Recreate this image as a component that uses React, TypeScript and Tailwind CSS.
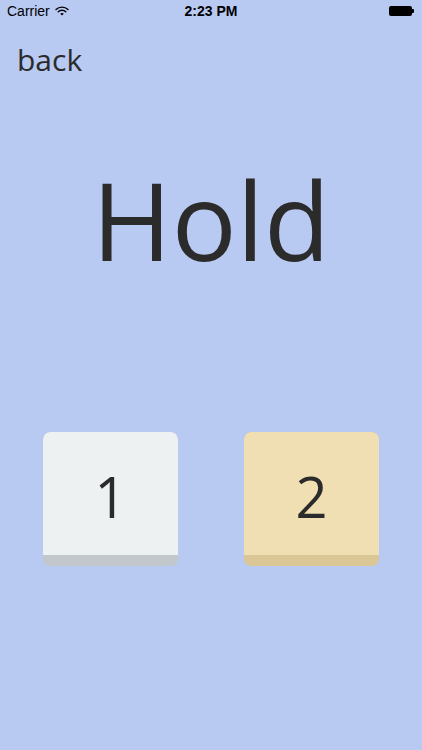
import React from "react";

function Wifi() {
  return (
    <svg width="14" height="10" viewBox="0 0 14 10" className="ml-[5px]">
      <path d="M1 3.6a8.5 8.5 0 0 1 12 0" stroke="#000" strokeWidth="1.4" fill="none" strokeLinecap="round" />
      <path d="M3.2 5.8a5.3 5.3 0 0 1 7.6 0" stroke="#000" strokeWidth="1.4" fill="none" strokeLinecap="round" />
      <path d="M7 9.6 5.2 7.8a2.6 2.6 0 0 1 3.6 0z" fill="#000" />
    </svg>
  );
}

function Battery() {
  return (
    <div className="flex items-center">
      <div className="w-[23px] h-[10px] rounded-[2px] bg-black" />
      <div className="w-[2px] h-[4px] bg-black rounded-r-[1px]" />
    </div>
  );
}

function Key({ label, face, edge }: { label: string; face: string; edge: string }) {
  return (
    <div className={`w-[135px] h-[134px] rounded-[7px] ${edge} flex flex-col overflow-hidden`}>
      <div className={`h-[123px] ${face} rounded-t-[7px] flex items-center justify-center`}>
        <span className="text-[56px] leading-none font-normal text-[#2b2b2b] mt-[4px]">{label}</span>
      </div>
    </div>
  );
}

export default function App() {
  return (
    <div
      className="w-[422px] h-[750px] bg-[#b8c9f2] flex flex-col"
      style={{ fontFamily: '"Open Sans", "Noto Sans", sans-serif' }}
    >
      <div
        className="h-[22px] px-[7px] flex items-center justify-between text-[14px] text-black"
        style={{ fontFamily: '"Liberation Sans", Arial, sans-serif' }}
      >
        <div className="flex items-center w-[120px]">
          <span>Carrier</span>
          <Wifi />
        </div>
        <span className="font-bold">2:23 PM</span>
        <div className="w-[120px] flex justify-end pr-[1px]">
          <Battery />
        </div>
      </div>

      <div className="pl-[17px] mt-[23px] text-[30px] leading-none font-normal text-[#2b2b2b]">back</div>

      <div className="mt-[91px] flex justify-center">
        <span className="text-[108px] leading-none font-normal text-[#2b2b2b]">Hold</span>
      </div>

      <div className="mt-[158px] flex justify-between px-[43px]">
        <Key label="1" face="bg-[#edf1f2]" edge="bg-[#c2c7cc]" />
        <Key label="2" face="bg-[#f1dfb4]" edge="bg-[#dbc795]" />
      </div>
    </div>
  );
}
